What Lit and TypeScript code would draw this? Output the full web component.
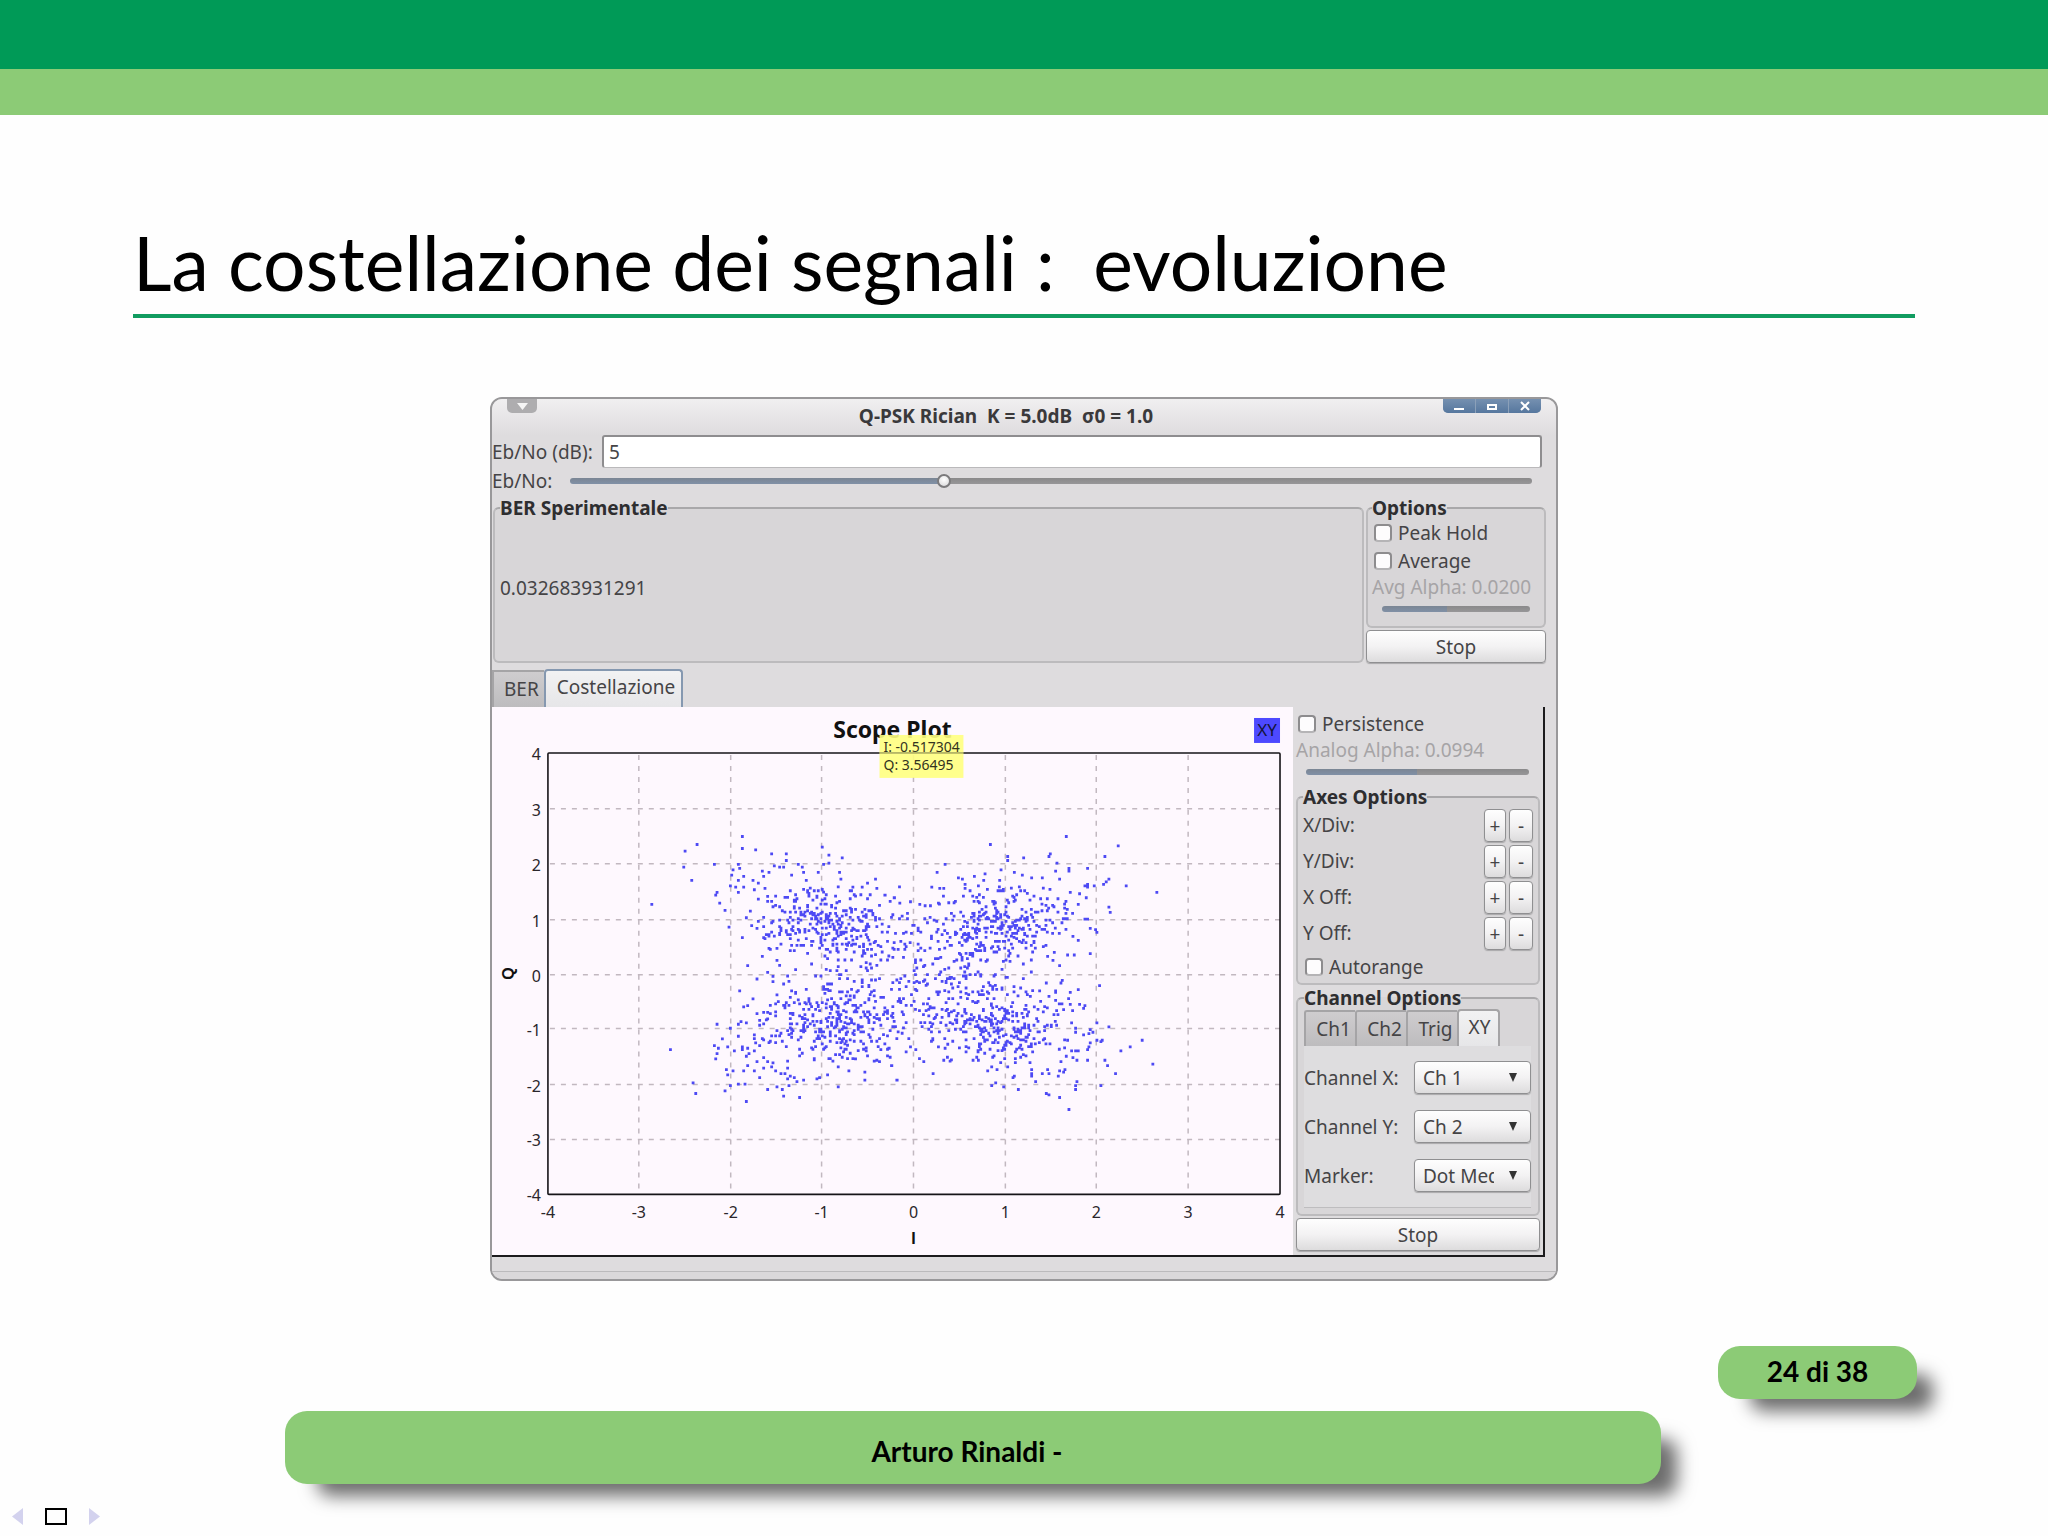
import { LitElement, css, html, svg } from "lit";
import { customElement, property } from "lit/decorators.js";

/* Plot geometry, in viewBox units of the 802 x 549 scope canvas. */
const XS = [56, 147, 239, 330, 422, 514, 605, 697, 789];
const YS = [46, 102, 157, 213, 268, 322, 378, 433, 488];
const TICKS = [-4, -3, -2, -1, 0, 1, 2, 3, 4];

/* Isolated samples, quadrant by quadrant, in thirds of a unit from each origin. */
const SPARSE: { ox: number; oy: number; pts: number[][] }[] = [
  {
    ox: -11, oy: -7,
    pts: [[785, 410], [649, 434], [613, 454], [785, 446], [825, 450], [873, 462], [917, 462], [917, 482], [609, 502],
      [633, 542], [701, 494], [773, 494], [777, 506], [757, 510], [753, 526], [789, 530], [773, 542], [749, 558],
      [765, 562], [789, 562], [773, 578], [709, 578], [705, 586], [717, 610], [733, 632], [513, 614], [745, 682],
      [785, 714], [797, 654], [809, 634], [813, 678], [829, 686], [817, 542], [833, 550], [849, 530], [845, 514],
      [865, 518], [881, 498], [897, 502], [909, 502], [933, 526], [953, 494], [965, 502], [969, 518], [977, 542],
      [1025, 442], [1045, 466], [1045, 490], [1029, 494], [1085, 474], [1013, 518], [1077, 518], [1081, 538],
      [1185, 538], [1161, 550], [1189, 566], [1145, 562], [1117, 562], [1213, 586], [1241, 594], [865, 746],
      [845, 770], [889, 782], [801, 798], [861, 818], [829, 838], [877, 830], [877, 846], [777, 874], [889, 886],
      [817, 898], [945, 810], [849, 714], [889, 746], [821, 570], [833, 598], [853, 566], [861, 590]],
  },
  {
    ox: 389, oy: -7,
    pts: [[330, 434], [558, 410], [714, 438], [674, 470], [382, 470], [382, 482], [430, 474], [510, 462], [506, 470],
      [530, 490], [194, 494], [170, 518], [622, 506], [526, 514], [566, 506], [566, 514], [538, 538], [362, 510],
      [402, 518], [426, 526], [454, 534], [486, 534], [314, 522], [282, 530], [234, 534], [246, 538], [310, 542],
      [358, 542], [254, 554], [254, 566], [154, 562], [178, 566], [190, 566], [294, 558], [614, 558], [622, 554],
      [622, 562], [642, 558], [670, 554], [678, 546], [686, 538], [738, 558], [830, 578], [598, 582], [618, 594],
      [594, 614], [570, 578], [686, 622], [690, 638], [614, 658], [622, 658], [630, 686], [646, 690], [650, 698],
      [578, 710], [594, 722], [630, 762], [582, 766], [562, 766], [522, 758], [538, 798], [518, 782], [502, 770],
      [658, 858], [546, 842], [542, 850], [498, 850], [594, 870], [570, 878], [478, 874], [506, 890], [526, 878],
      [450, 890], [14, 586], [42, 594], [58, 610], [90, 606], [118, 614], [134, 618], [150, 618], [174, 610]],
  },
  {
    ox: -11, oy: 273,
    pts: [[569, 210], [637, 310], [645, 342], [797, 366], [733, 334], [749, 318], [709, 134], [749, 146], [725, 178],
      [701, 198], [713, 206], [709, 222], [705, 238], [741, 202], [761, 214], [737, 270], [741, 286], [757, 274],
      [773, 170], [773, 134], [781, 126], [797, 130], [821, 166], [785, 202], [785, 210], [801, 206], [825, 190],
      [837, 198], [821, 214], [805, 222], [797, 230], [789, 274], [801, 258], [829, 246], [821, 274], [849, 234],
      [861, 246], [849, 266], [837, 294], [877, 250], [873, 262], [885, 274], [773, 314], [793, 314], [861, 330],
      [889, 322], [905, 330], [909, 350], [957, 354], [925, 318], [949, 306], [969, 302], [929, 290], [941, 294],
      [921, 266], [901, 282], [913, 282], [921, 298], [1073, 322], [1009, 298], [1017, 294], [1041, 286],
      [1153, 278], [1153, 302], [1249, 302], [1105, 274], [1233, 258], [1073, 262], [1189, 242], [1197, 246],
      [1125, 238], [1225, 206], [1201, 210], [1157, 214], [777, 34], [817, 58], [801, 78], [789, 82], [829, 102],
      [849, 98], [861, 98], [869, 102], [837, 122], [861, 118], [889, 46], [893, 66], [933, 34], [945, 38]],
  },
  {
    ox: 389, oy: 273,
    pts: [[566, 390], [538, 354], [498, 342], [506, 346], [414, 330], [370, 322], [334, 318], [346, 310], [402, 290],
      [398, 294], [466, 306], [586, 330], [586, 318], [590, 306], [662, 318], [706, 282], [682, 258], [674, 242],
      [722, 214], [750, 202], [786, 182], [818, 254], [686, 142], [650, 130], [650, 182], [662, 186], [666, 182],
      [630, 150], [626, 162], [638, 158], [610, 166], [630, 190], [622, 210], [626, 202], [622, 242], [590, 242],
      [586, 214], [594, 214], [574, 214], [578, 234], [558, 230], [542, 246], [538, 274], [534, 290], [550, 278],
      [554, 270], [506, 282], [486, 282], [454, 290], [454, 282], [454, 270], [502, 270], [158, 282], [130, 246],
      [190, 242], [50, 302], [34, 258], [90, 202], [106, 210], [174, 202], [194, 206], [202, 194], [26, 206],
      [658, 18], [594, 30], [570, 38], [570, 74], [598, 74], [614, 78], [610, 86], [574, 130], [586, 146],
      [586, 158], [562, 182], [526, 34], [526, 62], [506, 50], [478, 34], [450, 50], [462, 82], [550, 90],
      [322, 274], [334, 262], [350, 270], [382, 262], [278, 242], [294, 242]],
  },
];

/* Small deterministic generator, so the constellation is the same at each load. */
function makeRandom(seed: number) {
  let s = seed;
  return () => {
    s = (s + 0x6d2b79f5) | 0;
    let t = Math.imul(s ^ (s >>> 15), 1 | s);
    t = (t + Math.imul(t ^ (t >>> 7), 61 | t)) ^ t;
    return ((t ^ (t >>> 14)) >>> 0) / 4294967296;
  };
}

function constellationPath(): string {
  const random = makeRandom(24);
  const gauss = () => Math.sqrt(-2 * Math.log(1 - random())) * Math.cos(2 * Math.PI * random());
  const out: string[] = [];
  const dot = (x: number, y: number) =>
    out.push(`M${(x - 1.4).toFixed(2)} ${(y - 1.4).toFixed(2)}h2.8v2.8h-2.8z`);
  for (const q of SPARSE) for (const [x, y] of q.pts) dot(q.ox + x / 3, q.oy + y / 3);
  for (const [si, sq] of [[-1, 1], [1, 1], [-1, -1], [1, -1]]) {
    let n = 0;
    while (n < 345) {
      const r = 1.2 + 0.52 * gauss();
      const t = 0.36 * gauss();
      const i = (si * (r - t)) / Math.SQRT2;
      const k = (sq * (r + t)) / Math.SQRT2;
      if (Math.abs(i) > 1.75 || Math.abs(k) > 1.6 || Math.hypot(i, k) > 2.15) continue;
      const x = Math.round((422 + i * 91.7) * 0.75) / 0.75;
      const y = Math.round((268 - k * 55.2) * 0.75) / 0.75;
      dot(x, y);
      n++;
    }
  }
  return out.join("");
}

const DOTS = constellationPath();

const controls = css`
  * { box-sizing: border-box; }
  button, input, select { font: inherit; color: inherit; margin: 0; }
  .push {
    border: 1px solid #8f8f91;
    border-radius: 4px;
    background: linear-gradient(#fefefe, #f3f2f3 50%, #dddcdd);
    box-shadow: 0 1px 1px #a9a8aa;
    padding: 0;
    height: 33px;
    line-height: 22px;
  }
  .box {
    min-width: 0;
    margin: 0;
    padding: 0 5px;
    border: 2px solid #bcbbbd;
    border-top-color: #a9a8aa;
    border-radius: 6px;
    background: #d8d6d8;
  }
  .box > legend {
    padding: 0;
    font-weight: 700;
    color: #2e2e30;
    line-height: 22px;
    height: 22px;
  }
  .check { display: flex; align-items: center; gap: 6px; height: 28px; line-height: 22px; }
  .check input {
    appearance: none;
    width: 18px;
    height: 18px;
    border: 2px solid #8d8c8e;
    border-bottom-color: #b5b4b6;
    border-radius: 4px;
    background: #fdfcfd;
  }
  .dim { display: block; color: #a6a4a6; height: 25px; line-height: 24px; white-space: nowrap; }
  .tabs { display: flex; align-items: flex-end; }
  .tab {
    border: 2px solid #a5a4a6;
    border-bottom: 0;
    border-right-width: 0;
    background: linear-gradient(#cfcdcf, #bdbcbe);
    padding: 0 5px 2px 10px;
    height: 37px;
    line-height: 22px;
    white-space: nowrap;
  }
  .tab.on {
    height: 38px;
    border-right-width: 2px;
    border-radius: 4px 4px 0 0;
    background: linear-gradient(#f2f2f3, #e6e6e8);
  }
`;

@customElement("level-slider")
export class LevelSlider extends LitElement {
  @property() label = "";
  @property({ type: Number }) value = 0;
  @property({ type: Boolean }) disabled = false;

  static styles = css`
    :host { display: block; height: 18px; }
    .range {
      appearance: none;
      display: block;
      width: 100%;
      height: 100%;
      margin: 0;
      background: transparent;
    }
    .range::-webkit-slider-runnable-track {
      height: 6px;
      border-radius: 3px;
      background:
        linear-gradient(#70706f55, transparent),
        linear-gradient(90deg, #8090a6 var(--fill), #979698 var(--fill));
    }
    .range::-webkit-slider-thumb {
      appearance: none;
      width: 14px;
      height: 14px;
      margin-top: -4px;
      border: 2px solid #7b7a7c;
      border-radius: 50%;
      background: radial-gradient(circle at 50% 35%, #ffffff, #d6d5d7);
    }
    .range:disabled::-webkit-slider-thumb { visibility: hidden; }
  `;

  render() {
    return html`<input class="range" type="range" min="0" max="100" step="any" .value=${String(this.value)}
      style="--fill:${this.value}%" aria-label=${this.label} ?disabled=${this.disabled} />`;
  }
}

@customElement("scope-plot")
export class ScopePlot extends LitElement {
  static styles = css`
    :host { display: block; background: #fef8fe; }
    .canvas { display: block; width: 100%; height: auto; font-family: "Noto Sans", sans-serif; }
    .tick { font-size: 16px; fill: #2a262b; }
    .name { font-size: 16px; font-weight: 700; fill: #111; font-family: "Liberation Sans", sans-serif; }
    .title { font-size: 23px; font-weight: 700; fill: #111; }
    .tag { font-size: 17px; fill: #14143c; }
    .tip { font-size: 14px; fill: #33331e; }
    .grid { stroke: #c2b8c0; stroke-width: 1.5; stroke-dasharray: 5 6; }
    .frame { fill: none; stroke: #161418; stroke-width: 1.6; }
    .dots { fill: #4d49f4; }
    .end { text-anchor: end; }
    .mid { text-anchor: middle; }
  `;

  render() {
    return html`<svg class="canvas" viewBox="0 0 802 549" role="img" aria-label="Scope Plot">
      ${XS.slice(1, -1).map((x) => svg`<path class="grid" d="M${x} 48V488" />`)}
      ${YS.slice(1, -1).map((y) => svg`<path class="grid" d="M58 ${y}H789" />`)}
      <path class="dots" d=${DOTS} />
      <rect class="frame" x="56" y="46" width="733" height="442" rx="1" />
      ${TICKS.map((t, n) => svg`
        <text class="tick mid" x=${XS[n]} y="512">${t}</text>
        <text class="tick end" x="49" y=${YS[8 - n] + 7}>${t}</text>`)}
      <text class="title mid" x="401" y="31">Scope Plot</text>
      <rect x="763" y="11" width="26" height="25" fill="#4d49ff" />
      <text class="tag mid" x="776" y="29">XY</text>
      <rect x="388" y="28" width="84" height="43" fill="#ffff80" fill-opacity="0.9" />
      <path d="M388 46H472" stroke="#8a8a58" />
      <text class="tip" x="392" y="45">I: -0.517304</text>
      <text class="tip" x="392" y="63">Q: 3.56495</text>
      <text class="name mid" x="422" y="538">I</text>
      <text class="name mid" transform="translate(22 267) rotate(-90)">Q</text>
    </svg>`;
  }
}

@customElement("scope-controls")
export class ScopeControls extends LitElement {
  static styles = [controls, css`
    :host { display: flex; flex-direction: column; padding: 3px 3px 4px 3px; }
    .persist { padding-left: 2px; }
    .alpha { margin: 0 11px 5px 10px; }
    .axes { padding: 1px 5px 2px; }
    .rows { display: grid; gap: 3px; }
    .row { display: grid; grid-template-columns: 1fr 22px 24px; gap: 3px; line-height: 33px; }
    .auto { padding-left: 2px; }
    .channel { margin: 2px 0 0; padding: 0 7px 6px 6px; }
    .ctabs .tab { flex: 0 0 51px; padding: 0 0 0 6px; height: 36px; border-radius: 3px 0 0 0; }
    .ctabs .tab.on { flex-basis: 43px; padding: 0 0 3px 2px; height: 37px; border-radius: 4px 4px 0 0; }
    .pane { display: grid; gap: 16px; padding: 15px 0 15px; background: #dedddf; border-bottom: 1px solid #bebdbf; }
    .pick { display: grid; grid-template-columns: 1fr 117px; align-items: center; line-height: 22px; white-space: nowrap; }
    .wrap { display: grid; align-items: center; }
    .wrap > * { grid-area: 1 / 1; }
    .drop { appearance: none; width: 100%; padding: 0 36px 0 8px; text-align: left; overflow: hidden; }
    .arrow { justify-self: end; width: 8px; height: 9px; margin-right: 14px; pointer-events: none; }
    .stop { margin-top: 2px; }
  `];

  render() {
    return html`
      <label class="check persist"><input type="checkbox" />Persistence</label>
      <span class="dim">Analog Alpha: 0.0994</span>
      <level-slider class="alpha" label="Analog Alpha" value="50" disabled></level-slider>
      <fieldset class="box axes">
        <legend>Axes Options</legend>
        <div class="rows">
          ${["X/Div:", "Y/Div:", "X Off:", "Y Off:"].map((name) => html`
            <div class="row">
              <span>${name}</span>
              <button class="push" aria-label="${name} +">+</button>
              <button class="push" aria-label="${name} -">-</button>
            </div>`)}
          <label class="check auto"><input type="checkbox" />Autorange</label>
        </div>
      </fieldset>
      <fieldset class="box channel">
        <legend>Channel Options</legend>
        <div class="tabs ctabs" role="tablist">
          ${["Ch1", "Ch2", "Trig", "XY"].map((t) => html`
            <button class="tab ${t === "XY" ? "on" : ""}" role="tab" aria-selected=${t === "XY"}>${t}</button>`)}
        </div>
        <div class="pane">
          ${[["Channel X:", "Ch 1"], ["Channel Y:", "Ch 2"], ["Marker:", "Dot Med"]].map(([name, v], n) => html`
            <div class="pick">
              <label for="pick${n}">${name}</label>
              <span class="wrap">
                <select id="pick${n}" class="push drop"><option>${v}</option></select>
                <svg class="arrow" viewBox="0 0 8 9"><path d="M0 0H8L4 9Z" fill="#333" /></svg>
              </span>
            </div>`)}
        </div>
      </fieldset>
      <button class="push stop">Stop</button>`;
  }
}

@customElement("psk-window")
export class PskWindow extends LitElement {
  static styles = [controls, css`
    :host {
      display: block;
      border: 2px solid #99989a;
      border-radius: 12px;
      background: #dedcde;
      overflow: hidden;
      font: 19px/22px "Noto Sans", sans-serif;
      color: #454446;
    }
    .bar {
      display: grid;
      grid-template-columns: 1fr auto 1fr;
      height: 36px;
      background: linear-gradient(#f0eff0, #dedcde);
    }
    .bar h2 { margin: 0; padding: 6px 36px 0 0; font: 700 19px/22px "Noto Sans", sans-serif; color: #3a393b; white-space: pre; }
    .menu, .frame-button { border: 0; padding: 0; height: 14px; display: grid; place-items: center; }
    .menu { width: 30px; margin-left: 15px; background: #aeadaf; border-radius: 0 0 5px 5px; }
    .menu svg { width: 11px; height: 7px; }
    .frame-buttons { display: flex; justify-self: end; margin-right: 15px; height: 14px; gap: 1px; background: #8ba0b9; border-radius: 0 0 5px 5px; overflow: hidden; }
    .frame-button { width: 32px; background: linear-gradient(#7590b0, #56779e); }
    .frame-button svg { width: 12px; height: 12px; fill: none; stroke: #fff; stroke-width: 2; }
    .entry { display: grid; grid-template-columns: 110px 1fr; padding-right: 14px; align-items: center; white-space: nowrap; }
    .entry input {
      height: 33px;
      width: 100%;
      padding: 0 5px;
      border: 2px solid #8e8d8f;
      border-bottom: 1px solid #bab9bb;
      border-radius: 3px;
      background: #fff;
    }
    .level { display: grid; grid-template-columns: 78px 1fr; align-items: center; height: 29px; padding: 0 24px 3px 0; }
    .top { display: grid; grid-template-columns: 1fr 180px; gap: 2px; padding: 0 10px 6px 1px; }
    .ber output { display: block; padding-top: 58px; }
    .ber { padding: 0 5px; }
    .side { display: flex; flex-direction: column; gap: 2px; }
    .opts { padding: 0 4px 8px; }
    .opts .check { padding-left: 2px; }
    .opts level-slider { margin: 0 10px; }
    .main-tabs { height: 38px; }
    .main-tabs .tab.on { border-color: #8598b0; padding: 0 6px 4px 11px; }
    .scope {
      display: grid;
      grid-template-columns: 1fr 250px;
      margin-right: 11px;
      border: solid #1c1b1d;
      border-width: 0 2px 2px 0;
    }
    .foot { height: 22px; background: linear-gradient(#dedcde 14px, #bbbabc 14px 15px, #dad8da 15px); }
  `];

  render() {
    return html`
      <div class="bar">
        <button class="menu" aria-label="Menu"><svg viewBox="0 0 11 7"><path d="M0 0H11L5.5 7Z" fill="#f5f5f5" /></svg></button>
        <h2>Q-PSK Rician  K = 5.0dB  σ0 = 1.0</h2>
        <div class="frame-buttons">
          <button class="frame-button" aria-label="Minimize"><svg viewBox="0 0 12 12"><path d="M1 9H11" /></svg></button>
          <button class="frame-button" aria-label="Maximize"><svg viewBox="0 0 12 12"><path d="M2 5H10V9H2Z" /></svg></button>
          <button class="frame-button" aria-label="Close"><svg viewBox="0 0 12 12"><path d="M2 2L10 10M10 2L2 10" /></svg></button>
        </div>
      </div>
      <div class="entry"><label for="ebno">Eb/No (dB):</label><input id="ebno" type="text" value="5" /></div>
      <div class="level"><span>Eb/No:</span><level-slider label="Eb/No" value="38.7"></level-slider></div>
      <div class="top">
        <fieldset class="box ber"><legend>BER Sperimentale</legend><output>0.032683931291</output></fieldset>
        <div class="side">
          <fieldset class="box opts">
            <legend>Options</legend>
            <label class="check"><input type="checkbox" />Peak Hold</label>
            <label class="check"><input type="checkbox" />Average</label>
            <span class="dim">Avg Alpha: 0.0200</span>
            <level-slider label="Avg Alpha" value="44" disabled></level-slider>
          </fieldset>
          <button class="push">Stop</button>
        </div>
      </div>
      <div class="tabs main-tabs" role="tablist">
        <button class="tab" role="tab" aria-selected="false">BER</button>
        <button class="tab on" role="tab" aria-selected="true">Costellazione</button>
      </div>
      <div class="scope"><scope-plot></scope-plot><scope-controls></scope-controls></div>
      <div class="foot"></div>`;
  }
}

@customElement("app-root")
export class AppRoot extends LitElement {
  static styles = css`
    * { box-sizing: border-box; }
    :host { display: flex; flex-direction: column; min-height: 100vh; background: #fefefe; font-family: Lato, sans-serif; color: #000; }
    .band { height: 69px; background: #009a57; }
    .subband { height: 46px; background: #8ccb76; }
    .heading { margin: 95px 133px 0; border-bottom: 4px solid #119c60; }
    .heading h1 { margin: 0; font: 400 75px/104px Lato, sans-serif; white-space: pre; }
    .window { width: 100%; max-width: 1068px; margin: 79px auto 48px; }
    .foot { margin-top: auto; }
    .plate { background: #8ccb76; border-radius: 22px; font-weight: 700; text-align: center; box-shadow: 24px 20px 18px -8px rgb(0 0 0 / 58%); }
    .page { width: 199px; height: 53px; margin: 0 131px 12px auto; font-size: 28px; line-height: 50px; }
    .author { height: 73px; margin: 0 387px 24px 285px; padding-right: 12px; font-size: 28px; line-height: 80px; }
    .nav { display: flex; gap: 22px; padding: 0 12px 11px; }
    .nav button { border: 0; padding: 0; background: none; height: 17px; display: block; }
    .nav svg { display: block; height: 17px; }
  `;

  render() {
    return html`
      <div class="band"></div>
      <div class="subband"></div>
      <header class="heading"><h1>La costellazione dei segnali :  evoluzione</h1></header>
      <psk-window class="window"></psk-window>
      <footer class="foot">
        <div class="plate page">24 di 38</div>
        <div class="plate author">Arturo Rinaldi -</div>
        <nav class="nav">
          <button aria-label="Previous"><svg width="11" viewBox="0 0 11 17"><path d="M11 0V17L0 8.5Z" fill="#d3d2ee" /></svg></button>
          <button aria-label="Frame"><svg width="22" viewBox="0 0 22 17"><path d="M1 1H21V16H1Z" fill="none" stroke="#000" stroke-width="2" /></svg></button>
          <button aria-label="Next"><svg width="11" viewBox="0 0 11 17"><path d="M0 0V17L11 8.5Z" fill="#d3d2ee" /></svg></button>
        </nav>
      </footer>`;
  }
}
